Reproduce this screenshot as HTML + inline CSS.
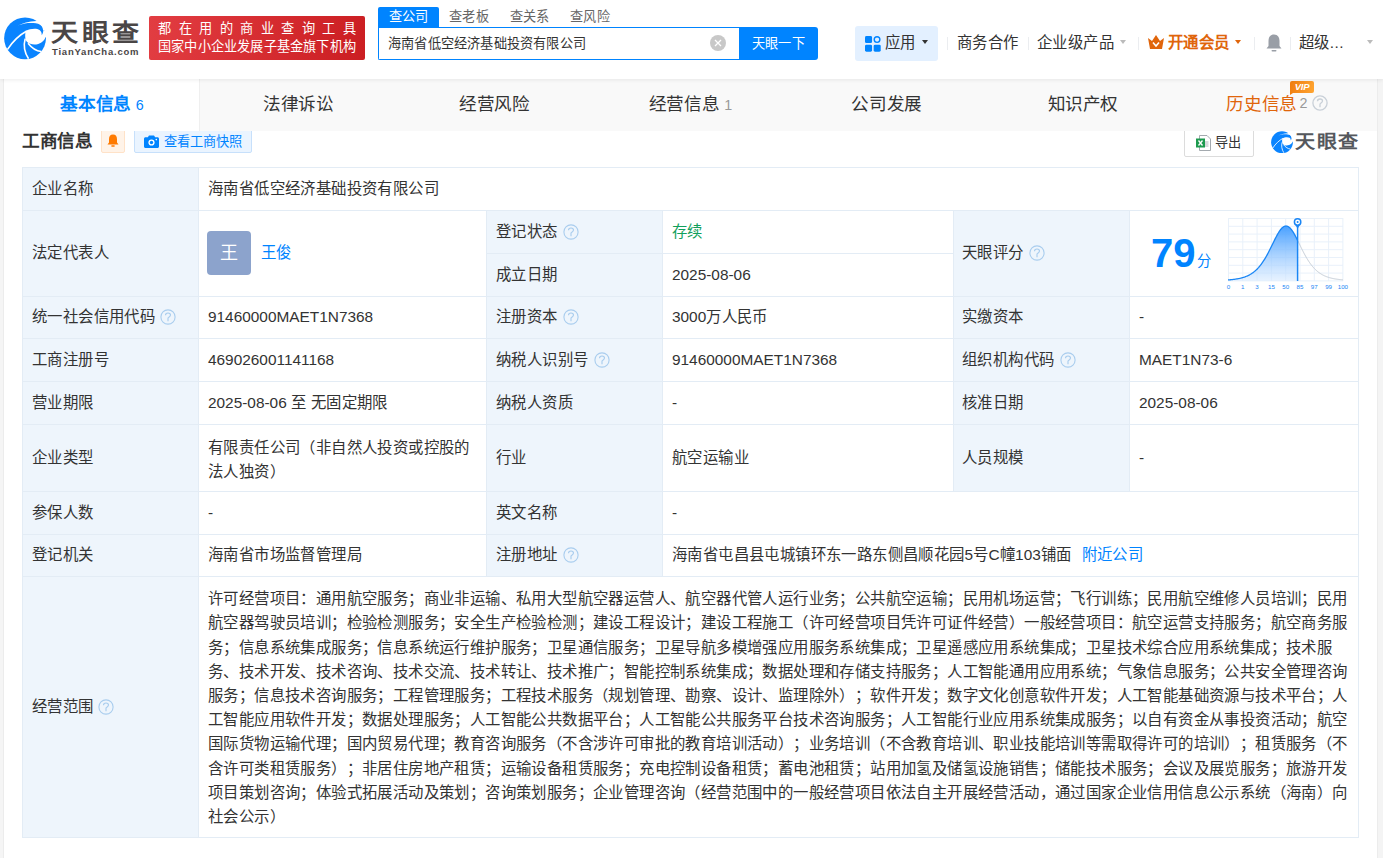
<!DOCTYPE html><html lang="zh-CN"><head><meta charset="utf-8"><title>天眼查</title><style>
*{margin:0;padding:0;box-sizing:border-box}
html,body{width:1383px;height:858px;overflow:hidden;background:#fff}
body{font-family:"Liberation Sans",sans-serif;color:#333;position:relative;text-spacing-trim:space-all;-webkit-font-smoothing:antialiased}
.ab{position:absolute;white-space:nowrap}
.hdr{position:absolute;left:0;top:0;width:1383px;height:79px;background:#fff;box-shadow:0 1px 4px rgba(0,0,0,.08);z-index:5}
.tb{position:absolute;left:4px;top:79px;width:1373px;height:52px;background:#f9f9f9;z-index:4}
.lbl{background:#eef5fc}
.cell{position:absolute}
.q{display:inline-block;position:absolute;width:14px;height:14px;border:1px solid #b9d3ec;border-radius:50%;color:#a9c6e6;font-size:10px;line-height:12px;text-align:center}
</style></head><body>
<div class="ab" style="left:0;top:79px;width:3px;height:779px;background:#f5f5f5"></div>
<div class="ab" style="left:3px;top:79px;width:1px;height:779px;background:#ececec"></div>
<div class="ab" style="left:1377px;top:79px;width:1px;height:779px;background:#ececec"></div>
<div class="ab" style="left:1378px;top:79px;width:5px;height:779px;background:#f4f4f4"></div>
<div class="hdr">
<svg class="ab" style="left:2px;top:15px" width="46" height="46" viewBox="0 0 858 858"><circle cx="430" cy="435" r="390" fill="#0a84ff"/>
<path d="M295 195 C 380 155, 500 120, 640 112 L 700 40 L 900 40 L 900 287 L 768 290 C 762 240, 745 200, 709 180 C 640 148, 520 145, 429 160 C 380 170, 330 182, 295 195 Z" fill="#fff"/>
<path d="M440 300 C 520 255, 640 240, 700 280 C 735 305, 745 345, 738 378 C 765 340, 772 310, 768 290 L 900 290 L 900 400 L 815 410 C 790 470, 745 530, 640 548 C 560 556, 505 535, 480 515 C 440 480, 420 440, 440 300 Z" fill="#fff"/>
<path d="M462 298 C 330 370, 200 490, 100 645" stroke="#fff" stroke-width="30" fill="none"/>
<path d="M432 440 C 400 560, 420 700, 495 815" stroke="#fff" stroke-width="30" fill="none"/>
<path d="M485 525 C 560 620, 640 670, 730 682" stroke="#fff" stroke-width="30" fill="none"/></svg>
<div class="ab" style="left:51px;top:17.5px;font-size:27px;line-height:34px;font-weight:bold;color:#4a4646;letter-spacing:3.5px;transform:scaleY(0.9);transform-origin:0 0">天眼查</div>
<div class="ab" style="left:52px;top:47px;font-size:9.5px;line-height:10px;font-weight:bold;color:#4a4646;letter-spacing:0.78px">TianYanCha.com</div>
<div class="ab" style="left:149px;top:16px;width:216px;height:44px;border-radius:2px;background:linear-gradient(100deg,#e23d42,#cb1e22)"></div>
<div class="ab" style="left:158px;top:20px;width:198px;font-size:13.2px;line-height:18px;color:#fff;text-align:justify;text-align-last:justify;letter-spacing:0.2px">都 在 用 的 商 业 查 询 工 具</div>
<div class="ab" style="left:158px;top:37.5px;font-size:13.2px;line-height:18px;color:#fff;letter-spacing:0.2px">国家中小企业发展子基金旗下机构</div>
<div class="ab" style="left:378px;top:7px;width:61px;height:21px;background:#0084ff;border-radius:2px 2px 0 0"></div>
<div class="ab" style="left:378.0px;top:7px;width:61px;text-align:center;font-size:13.2px;line-height:20px;color:#fff;letter-spacing:0.2px">查公司</div>
<div class="ab" style="left:438.5px;top:7px;width:61px;text-align:center;font-size:13.2px;line-height:20px;color:#666;letter-spacing:0.2px">查老板</div>
<div class="ab" style="left:499.0px;top:7px;width:61px;text-align:center;font-size:13.2px;line-height:20px;color:#666;letter-spacing:0.2px">查关系</div>
<div class="ab" style="left:559.5px;top:7px;width:61px;text-align:center;font-size:13.2px;line-height:20px;color:#666;letter-spacing:0.2px">查风险</div>
<div class="ab" style="left:378px;top:27px;width:363px;height:33px;border:1px solid #0084ff;border-right:none;border-radius:0 0 0 2px;background:#fff"></div>
<div class="ab" style="left:388px;top:34px;font-size:13.2px;line-height:20px;color:#333;letter-spacing:0.2px">海南省低空经济基础投资有限公司</div>
<svg class="ab" style="left:710px;top:35px" width="16" height="16" viewBox="0 0 16 16"><circle cx="8" cy="8" r="8" fill="#c8c8c8"/><path d="M5 5L11 11M11 5L5 11" stroke="#fff" stroke-width="1.3"/></svg>
<div class="ab" style="left:739px;top:27px;width:79px;height:33px;background:#0084ff;border-radius:0 3px 3px 0;color:#fff;font-size:13.2px;line-height:33px;text-align:center;letter-spacing:0.2px">天眼一下</div>
<div class="ab" style="left:855px;top:26px;width:83px;height:35px;background:#e3f0ff;border-radius:3px"></div>
<svg class="ab" style="left:864.5px;top:35.5px" width="16" height="16" viewBox="0 0 17 17">
<rect x="0" y="0" width="7.5" height="7.5" rx="1.5" fill="#0084ff"/>
<circle cx="12.8" cy="3.75" r="3" fill="none" stroke="#0084ff" stroke-width="1.5"/>
<rect x="0" y="9.2" width="7.5" height="7.5" rx="1.5" fill="#0084ff"/>
<rect x="9.2" y="9.2" width="7.5" height="7.5" rx="1.5" fill="#0084ff"/>
</svg>
<div class="ab" style="left:885px;top:32px;font-size:15.4px;line-height:22px;color:#333;letter-spacing:0.4px">应用</div>
<div class="ab" style="left:921.7px;top:40px;width:0;height:0;border-left:3.3px solid transparent;border-right:3.3px solid transparent;border-top:4px solid #333"></div>
<div class="ab" style="left:947px;top:37px;width:1px;height:13px;background:#ebedf0"></div>
<div class="ab" style="left:957px;top:32px;font-size:15.4px;line-height:22px;color:#333;letter-spacing:0.4px">商务合作</div>
<div class="ab" style="left:1028px;top:37px;width:1px;height:13px;background:#ebedf0"></div>
<div class="ab" style="left:1037px;top:32px;font-size:15.4px;line-height:22px;color:#333;letter-spacing:0.4px">企业级产品</div>
<div class="ab" style="left:1119.7px;top:40px;width:0;height:0;border-left:3.3px solid transparent;border-right:3.3px solid transparent;border-top:4px solid #bbb"></div>
<div class="ab" style="left:1138px;top:37px;width:1px;height:13px;background:#ebedf0"></div>
<svg class="ab" style="left:1148px;top:35px" width="16" height="14" viewBox="0 0 16 14">
<path d="M0 3 L4 6 L8 0 L12 6 L16 3 L14 14 L2 14 Z" fill="#e0650b"/>
<path d="M5 7.5 L8 11 L11 7.5" stroke="#fff" stroke-width="1.6" fill="none"/>
</svg>
<div class="ab" style="left:1168px;top:32px;font-size:15.4px;line-height:22px;color:#e0650b;font-weight:bold;letter-spacing:0.4px">开通会员</div>
<div class="ab" style="left:1234.7px;top:40px;width:0;height:0;border-left:3.3px solid transparent;border-right:3.3px solid transparent;border-top:4px solid #e0650b"></div>
<div class="ab" style="left:1254px;top:37px;width:1px;height:13px;background:#ebedf0"></div>
<svg class="ab" style="left:1266px;top:34px" width="16" height="18" viewBox="0 0 16 18">
<path d="M8 0.5 C 4 0.5 2.5 3.5 2.5 7 L2.5 12 L0.5 14.5 L15.5 14.5 L13.5 12 L13.5 7 C13.5 3.5 12 0.5 8 0.5Z" fill="#999ea6"/>
<rect x="5.5" y="16" width="5" height="1.6" rx="0.8" fill="#999ea6"/>
</svg>
<div class="ab" style="left:1290px;top:37px;width:1px;height:13px;background:#ebedf0"></div>
<div class="ab" style="left:1299px;top:32px;font-size:15.4px;line-height:22px;color:#333;letter-spacing:0.4px">超级...</div>
<div class="ab" style="left:1366.7px;top:40px;width:0;height:0;border-left:3.3px solid transparent;border-right:3.3px solid transparent;border-top:4px solid #bbb"></div>
</div>
<div class="tb">
<div class="ab" style="left:0;top:0;width:195px;height:52px;background:#fff"></div>
<div class="ab" style="left:195px;top:0;width:1px;height:52px;background:#efefef"></div>
<div class="ab" style="left:0.00px;top:0px;width:196.14px;height:52px;text-align:center;font-size:17.6px;line-height:50px;color:#0084ff;font-weight:bold;letter-spacing:-0.4px">基本信息<span style="font-size:14.3px;color:#0084ff;margin-left:5px;font-weight:normal;letter-spacing:0">6</span></div>
<div class="ab" style="left:196.14px;top:0px;width:196.14px;height:52px;text-align:center;font-size:17.6px;line-height:50px;color:#333;letter-spacing:-0.4px">法律诉讼</div>
<div class="ab" style="left:392.29px;top:0px;width:196.14px;height:52px;text-align:center;font-size:17.6px;line-height:50px;color:#333;letter-spacing:-0.4px">经营风险</div>
<div class="ab" style="left:588.43px;top:0px;width:196.14px;height:52px;text-align:center;font-size:17.6px;line-height:50px;color:#333;letter-spacing:-0.4px">经营信息<span style="font-size:14.3px;color:#999;margin-left:5px;font-weight:normal;letter-spacing:0">1</span></div>
<div class="ab" style="left:784.57px;top:0px;width:196.14px;height:52px;text-align:center;font-size:17.6px;line-height:50px;color:#333;letter-spacing:-0.4px">公司发展</div>
<div class="ab" style="left:980.71px;top:0px;width:196.14px;height:52px;text-align:center;font-size:17.6px;line-height:50px;color:#333;letter-spacing:-0.4px">知识产权</div>
<div class="ab" style="left:1174.36px;top:-1px;width:196.14px;height:52px;text-align:center;font-size:17.6px;line-height:50px;color:#e0650b;letter-spacing:-0.4px">历史信息<span style="font-size:14.3px;color:#999;margin-left:2.5px;font-weight:normal;letter-spacing:0;vertical-align:1.5px">2</span><span style="display:inline-block;width:19px;height:10px"></span></div>
<svg class="ab" style="left:1307.5px;top:16px" width="16" height="16" viewBox="0 0 16 16"><path d="M5.5 6.2 C5.5 4.9 6.6 4 8 4 C9.4 4 10.5 4.9 10.5 6.1 C10.5 7.2 9.6 7.7 8.7 8.3 C8.2 8.6 8 9 8 9.6 L8 12.3" fill="none" stroke="#c9d0d8" stroke-width="1.3"/><circle cx="8" cy="8" r="7.1" fill="none" stroke="#c9d0d8" stroke-width="1.3"/></svg>
<div class="ab" style="left:1286px;top:2px;width:24px;height:12px;background:linear-gradient(100deg,#f07d10,#ffa531);border-radius:2px 2px 2px 0;color:#fff;font-size:9.5px;line-height:12px;font-weight:bold;font-style:italic;text-align:center;letter-spacing:-0.3px">VIP</div>
<div class="ab" style="left:1286px;top:13.5px;width:0;height:0;border-top:2.5px solid #f07d10;border-right:3.5px solid transparent"></div>
</div>
<div class="ab" style="left:22px;top:128px;font-size:17.6px;line-height:26px;font-weight:bold;color:#333;letter-spacing:-0.4px">工商信息</div>
<div class="ab" style="left:101px;top:128px;width:24px;height:25px;background:#fff3e8;border:1px solid #ffe2c8;border-radius:2px"></div>
<svg class="ab" style="left:107px;top:134px" width="12" height="13" viewBox="0 0 12 13"><path d="M6 0.5C3.2 0.5 2 2.6 2 5.2L2 8.6L0.5 10.5L11.5 10.5L10 8.6L10 5.2C10 2.6 8.8 0.5 6 0.5Z" fill="#ff7a00"/><rect x="4.2" y="11.2" width="3.6" height="1.6" rx="0.8" fill="#ff7a00"/></svg>
<div class="ab" style="left:134px;top:128px;width:118px;height:25px;background:#eaf4ff;border:1px solid #c7e0fb;border-radius:2px"></div>
<svg class="ab" style="left:144px;top:135px" width="15" height="13" viewBox="0 0 15 13">
<path d="M5 0.5 L10 0.5 L11.2 2.3 L13.5 2.3 C14.3 2.3 15 3 15 3.8 L15 11.5 C15 12.3 14.3 13 13.5 13 L1.5 13 C0.7 13 0 12.3 0 11.5 L0 3.8 C0 3 0.7 2.3 1.5 2.3 L3.8 2.3 Z" fill="#0084ff"/>
<circle cx="7.5" cy="7.5" r="3.1" fill="#fff"/><circle cx="7.5" cy="7.5" r="1.7" fill="#0084ff"/><circle cx="12.3" cy="4.6" r="0.8" fill="#fff"/>
</svg>
<div class="ab" style="left:163.5px;top:131.5px;font-size:13.2px;line-height:20px;color:#0084ff;letter-spacing:0.2px">查看工商快照</div>
<div class="ab" style="left:1184px;top:128px;width:70px;height:29px;background:#fff;border:1px solid #dcdcdc;border-radius:2px"></div>
<svg class="ab" style="left:1196px;top:135px" width="15" height="16" viewBox="0 0 15 16">
<path d="M3.5 0.5 L11 0.5 L14.5 4 L14.5 15.5 L3.5 15.5 Z" fill="#fff" stroke="#9aa0a6" stroke-width="0.9"/>
<path d="M8 7 H12.5 M8 9 H12.5 M8 11 H12.5" stroke="#9aa0a6" stroke-width="0.8"/>
<rect x="0" y="3.5" width="9" height="9" fill="#1d9a4e"/>
<path d="M2.5 5.5 L6.5 10.5 M6.5 5.5 L2.5 10.5" stroke="#fff" stroke-width="1.3"/>
</svg>
<div class="ab" style="left:1215px;top:133px;font-size:13.2px;line-height:20px;color:#333;letter-spacing:0.2px">导出</div>
<svg class="ab" style="left:1270px;top:130px" width="24" height="24" viewBox="0 0 858 858"><circle cx="430" cy="435" r="390" fill="#0a84ff"/>
<path d="M295 195 C 380 155, 500 120, 640 112 L 700 40 L 900 40 L 900 287 L 768 290 C 762 240, 745 200, 709 180 C 640 148, 520 145, 429 160 C 380 170, 330 182, 295 195 Z" fill="#fff"/>
<path d="M440 300 C 520 255, 640 240, 700 280 C 735 305, 745 345, 738 378 C 765 340, 772 310, 768 290 L 900 290 L 900 400 L 815 410 C 790 470, 745 530, 640 548 C 560 556, 505 535, 480 515 C 440 480, 420 440, 440 300 Z" fill="#fff"/>
<path d="M462 298 C 330 370, 200 490, 100 645" stroke="#fff" stroke-width="30" fill="none"/>
<path d="M432 440 C 400 560, 420 700, 495 815" stroke="#fff" stroke-width="30" fill="none"/>
<path d="M485 525 C 560 620, 640 670, 730 682" stroke="#fff" stroke-width="30" fill="none"/></svg>
<div class="ab" style="left:1295px;top:130px;font-size:20px;line-height:26px;font-weight:bold;color:#55585d;letter-spacing:1.5px;transform:scaleY(0.9);transform-origin:0 0">天眼查</div>
<div class="ab" style="left:22px;top:167px;width:176px;height:670px;background:#eef5fc"></div>
<div class="ab" style="left:486px;top:210px;width:176px;height:366px;background:#eef5fc"></div>
<div class="ab" style="left:953px;top:210px;width:176px;height:281px;background:#eef5fc"></div>
<div class="ab" style="left:22px;top:167px;width:1337px;height:1px;background:#e3ecf5"></div>
<div class="ab" style="left:22px;top:210px;width:1337px;height:1px;background:#e3ecf5"></div>
<div class="ab" style="left:22px;top:296px;width:1337px;height:1px;background:#e3ecf5"></div>
<div class="ab" style="left:22px;top:338px;width:1337px;height:1px;background:#e3ecf5"></div>
<div class="ab" style="left:22px;top:381px;width:1337px;height:1px;background:#e3ecf5"></div>
<div class="ab" style="left:22px;top:424px;width:1337px;height:1px;background:#e3ecf5"></div>
<div class="ab" style="left:22px;top:491px;width:1337px;height:1px;background:#e3ecf5"></div>
<div class="ab" style="left:22px;top:534px;width:1337px;height:1px;background:#e3ecf5"></div>
<div class="ab" style="left:22px;top:576px;width:1337px;height:1px;background:#e3ecf5"></div>
<div class="ab" style="left:22px;top:837px;width:1337px;height:1px;background:#e3ecf5"></div>
<div class="ab" style="left:486px;top:253px;width:468px;height:1px;background:#e3ecf5"></div>
<div class="ab" style="left:22px;top:167px;width:1px;height:671px;background:#e3ecf5"></div>
<div class="ab" style="left:1358px;top:167px;width:1px;height:671px;background:#e3ecf5"></div>
<div class="ab" style="left:198px;top:167px;width:1px;height:671px;background:#e3ecf5"></div>
<div class="ab" style="left:486px;top:210px;width:1px;height:367px;background:#e3ecf5"></div>
<div class="ab" style="left:662px;top:210px;width:1px;height:367px;background:#e3ecf5"></div>
<div class="ab" style="left:953px;top:210px;width:1px;height:282px;background:#e3ecf5"></div>
<div class="ab" style="left:1129px;top:210px;width:1px;height:282px;background:#e3ecf5"></div>
<div class="ab" style="left:32px;top:177.5px;font-size:15.4px;line-height:22px;;letter-spacing:0.4px"><span style="letter-spacing:0.4px">企业名称</span></div>
<div class="ab" style="left:208px;top:177.5px;font-size:15.4px;line-height:22px;;letter-spacing:0.4px"><span style="letter-spacing:0.4px">海南省低空经济基础投资有限公司</span></div>
<div class="ab" style="left:32px;top:242.0px;font-size:15.4px;line-height:22px;;letter-spacing:0.4px"><span style="letter-spacing:0.4px">法定代表人</span></div>
<div class="ab" style="left:207px;top:231px;width:44px;height:44px;border-radius:4px;background:#8ca3cc;color:#fff;font-size:18px;line-height:44px;text-align:center">王</div>
<div class="ab" style="left:261px;top:242.0px;font-size:15.4px;line-height:22px;color:#0084ff;letter-spacing:0.4px"><span style="letter-spacing:0.4px">王俊</span></div>
<div class="ab" style="left:496px;top:220.5px;font-size:15.4px;line-height:22px;;letter-spacing:0.4px"><span style="letter-spacing:0.4px">登记状态</span></div>
<svg class="ab" style="left:562.5px;top:223.5px" width="16" height="16" viewBox="0 0 16 16"><path d="M5.5 6.2 C5.5 4.9 6.6 4 8 4 C9.4 4 10.5 4.9 10.5 6.1 C10.5 7.2 9.6 7.7 8.7 8.3 C8.2 8.6 8 9 8 9.6 L8 12.3" fill="none" stroke="#a9cdee" stroke-width="1.15"/><circle cx="8" cy="8" r="7.1" fill="none" stroke="#a9cdee" stroke-width="1.1"/></svg>
<div class="ab" style="left:672px;top:220.5px;font-size:15.4px;line-height:22px;color:#12a05c;letter-spacing:0.4px"><span style="letter-spacing:0.4px">存续</span></div>
<div class="ab" style="left:496px;top:263.5px;font-size:15.4px;line-height:22px;;letter-spacing:0.4px"><span style="letter-spacing:0.4px">成立日期</span></div>
<div class="ab" style="left:672px;top:263.5px;font-size:15.4px;line-height:22px;;letter-spacing:0.4px"><span style="letter-spacing:0.4px"><span style="letter-spacing:0">2025-08-06</span></span></div>
<div class="ab" style="left:962px;top:242.0px;font-size:15.4px;line-height:22px;;letter-spacing:0.4px"><span style="letter-spacing:0.4px">天眼评分</span></div>
<svg class="ab" style="left:1028.5px;top:245.0px" width="16" height="16" viewBox="0 0 16 16"><path d="M5.5 6.2 C5.5 4.9 6.6 4 8 4 C9.4 4 10.5 4.9 10.5 6.1 C10.5 7.2 9.6 7.7 8.7 8.3 C8.2 8.6 8 9 8 9.6 L8 12.3" fill="none" stroke="#a9cdee" stroke-width="1.15"/><circle cx="8" cy="8" r="7.1" fill="none" stroke="#a9cdee" stroke-width="1.1"/></svg>
<div class="ab" style="left:1151px;top:230px;font-size:40px;line-height:46px;font-weight:bold;color:#0084ff">79</div>
<div class="ab" style="left:1197px;top:251px;font-size:14.3px;line-height:20px;color:#0084ff;letter-spacing:0.3px">分</div>
<svg class="ab" style="left:1224px;top:218px" width="126" height="75" viewBox="0 0 126 75">
<defs><linearGradient id="g1" x1="0" y1="0" x2="0" y2="1"><stop offset="0" stop-color="#3f9bff" stop-opacity=".95"/><stop offset="1" stop-color="#d6e9ff" stop-opacity=".6"/></linearGradient></defs>
<line x1="4.50" y1="0" x2="4.50" y2="63" stroke="#e9f1fa" stroke-width="1"/><line x1="18.80" y1="0" x2="18.80" y2="63" stroke="#e9f1fa" stroke-width="1"/><line x1="33.10" y1="0" x2="33.10" y2="63" stroke="#e9f1fa" stroke-width="1"/><line x1="47.40" y1="0" x2="47.40" y2="63" stroke="#e9f1fa" stroke-width="1"/><line x1="61.70" y1="0" x2="61.70" y2="63" stroke="#e9f1fa" stroke-width="1"/><line x1="76.00" y1="0" x2="76.00" y2="63" stroke="#e9f1fa" stroke-width="1"/><line x1="90.30" y1="0" x2="90.30" y2="63" stroke="#e9f1fa" stroke-width="1"/><line x1="104.60" y1="0" x2="104.60" y2="63" stroke="#e9f1fa" stroke-width="1"/><line x1="118.90" y1="0" x2="118.90" y2="63" stroke="#e9f1fa" stroke-width="1"/><line x1="4" y1="0.50" x2="119" y2="0.50" stroke="#e9f1fa" stroke-width="1"/><line x1="4" y1="8.30" x2="119" y2="8.30" stroke="#e9f1fa" stroke-width="1"/><line x1="4" y1="16.10" x2="119" y2="16.10" stroke="#e9f1fa" stroke-width="1"/><line x1="4" y1="23.90" x2="119" y2="23.90" stroke="#e9f1fa" stroke-width="1"/><line x1="4" y1="31.70" x2="119" y2="31.70" stroke="#e9f1fa" stroke-width="1"/><line x1="4" y1="39.50" x2="119" y2="39.50" stroke="#e9f1fa" stroke-width="1"/><line x1="4" y1="47.30" x2="119" y2="47.30" stroke="#e9f1fa" stroke-width="1"/><line x1="4" y1="55.10" x2="119" y2="55.10" stroke="#e9f1fa" stroke-width="1"/><line x1="4" y1="62.90" x2="119" y2="62.90" stroke="#e9f1fa" stroke-width="1"/>
<path d="M4.00,61.94 4.50,61.90 5.00,61.87 5.50,61.82 6.00,61.78 6.50,61.73 7.00,61.69 7.50,61.64 8.00,61.58 8.50,61.53 9.00,61.47 9.50,61.41 10.00,61.35 10.50,61.28 11.00,61.21 11.50,61.14 12.00,61.06 12.50,60.98 13.00,60.89 13.50,60.81 14.00,60.71 14.50,60.62 15.00,60.51 15.50,60.41 16.00,60.29 16.50,60.18 17.00,60.05 17.50,59.92 18.00,59.79 18.50,59.65 19.00,59.50 19.50,59.35 20.00,59.18 20.50,59.01 21.00,58.84 21.50,58.65 22.00,58.46 22.50,58.25 23.00,58.04 23.50,57.82 24.00,57.58 24.50,57.34 25.00,57.09 25.50,56.82 26.00,56.55 26.50,56.26 27.00,55.95 27.50,55.64 28.00,55.31 28.50,54.97 29.00,54.61 29.50,54.24 30.00,53.85 30.50,53.45 31.00,53.03 31.50,52.59 32.00,52.14 32.50,51.67 33.00,51.18 33.50,50.67 34.00,50.14 34.50,49.60 35.00,49.03 35.50,48.44 36.00,47.83 36.50,47.20 37.00,46.55 37.50,45.88 38.00,45.19 38.50,44.47 39.00,43.73 39.50,42.97 40.00,42.19 40.50,41.39 41.00,40.57 41.50,39.73 42.00,38.86 42.50,37.98 43.00,37.08 43.50,36.16 44.00,35.22 44.50,34.27 45.00,33.30 45.50,32.32 46.00,31.32 46.50,30.32 47.00,29.31 47.50,28.29 48.00,27.26 48.50,26.24 49.00,25.21 49.50,24.19 50.00,23.17 50.50,22.16 51.00,21.15 51.50,20.17 52.00,19.20 52.50,18.25 53.00,17.32 53.50,16.42 54.00,15.55 54.50,14.71 55.00,13.91 55.50,13.15 56.00,12.43 56.50,11.76 57.00,11.13 57.50,10.55 58.00,10.03 58.50,9.56 59.00,9.15 59.50,8.81 60.00,8.52 60.50,8.29 61.00,8.13 61.50,8.03 62.00,8.00 62.50,8.03 63.00,8.13 63.50,8.29 64.00,8.52 64.50,8.81 65.00,9.15 65.50,9.56 66.00,10.03 66.50,10.55 67.00,11.13 67.50,11.76 68.00,12.43 68.50,13.15 69.00,13.91 69.50,14.71 70.00,15.55 70.50,16.42 71.00,17.32 71.50,18.25 72.00,19.20 72.50,20.17 73.00,21.15 73.50,22.16 73.60,22.36 L73.6,62.7 L4,62.7 Z" fill="url(#g1)"/>
<polyline points="4.00,61.94 4.50,61.90 5.00,61.87 5.50,61.82 6.00,61.78 6.50,61.73 7.00,61.69 7.50,61.64 8.00,61.58 8.50,61.53 9.00,61.47 9.50,61.41 10.00,61.35 10.50,61.28 11.00,61.21 11.50,61.14 12.00,61.06 12.50,60.98 13.00,60.89 13.50,60.81 14.00,60.71 14.50,60.62 15.00,60.51 15.50,60.41 16.00,60.29 16.50,60.18 17.00,60.05 17.50,59.92 18.00,59.79 18.50,59.65 19.00,59.50 19.50,59.35 20.00,59.18 20.50,59.01 21.00,58.84 21.50,58.65 22.00,58.46 22.50,58.25 23.00,58.04 23.50,57.82 24.00,57.58 24.50,57.34 25.00,57.09 25.50,56.82 26.00,56.55 26.50,56.26 27.00,55.95 27.50,55.64 28.00,55.31 28.50,54.97 29.00,54.61 29.50,54.24 30.00,53.85 30.50,53.45 31.00,53.03 31.50,52.59 32.00,52.14 32.50,51.67 33.00,51.18 33.50,50.67 34.00,50.14 34.50,49.60 35.00,49.03 35.50,48.44 36.00,47.83 36.50,47.20 37.00,46.55 37.50,45.88 38.00,45.19 38.50,44.47 39.00,43.73 39.50,42.97 40.00,42.19 40.50,41.39 41.00,40.57 41.50,39.73 42.00,38.86 42.50,37.98 43.00,37.08 43.50,36.16 44.00,35.22 44.50,34.27 45.00,33.30 45.50,32.32 46.00,31.32 46.50,30.32 47.00,29.31 47.50,28.29 48.00,27.26 48.50,26.24 49.00,25.21 49.50,24.19 50.00,23.17 50.50,22.16 51.00,21.15 51.50,20.17 52.00,19.20 52.50,18.25 53.00,17.32 53.50,16.42 54.00,15.55 54.50,14.71 55.00,13.91 55.50,13.15 56.00,12.43 56.50,11.76 57.00,11.13 57.50,10.55 58.00,10.03 58.50,9.56 59.00,9.15 59.50,8.81 60.00,8.52 60.50,8.29 61.00,8.13 61.50,8.03 62.00,8.00 62.50,8.03 63.00,8.13 63.50,8.29 64.00,8.52 64.50,8.81 65.00,9.15 65.50,9.56 66.00,10.03 66.50,10.55 67.00,11.13 67.50,11.76 68.00,12.43 68.50,13.15 69.00,13.91 69.50,14.71 70.00,15.55 70.50,16.42 71.00,17.32 71.50,18.25 72.00,19.20 72.50,20.17 73.00,21.15 73.50,22.16 73.60,22.36" fill="none" stroke="#1a86f5" stroke-width="1.3"/>
<polyline points="73.60,22.36 74.00,23.17 74.50,24.19 75.00,25.21 75.50,26.24 76.00,27.26 76.50,28.29 77.00,29.31 77.50,30.32 78.00,31.32 78.50,32.32 79.00,33.30 79.50,34.27 80.00,35.22 80.50,36.16 81.00,37.08 81.50,37.98 82.00,38.86 82.50,39.73 83.00,40.57 83.50,41.39 84.00,42.19 84.50,42.97 85.00,43.73 85.50,44.47 86.00,45.19 86.50,45.88 87.00,46.55 87.50,47.20 88.00,47.83 88.50,48.44 89.00,49.03 89.50,49.60 90.00,50.14 90.50,50.67 91.00,51.18 91.50,51.67 92.00,52.14 92.50,52.59 93.00,53.03 93.50,53.45 94.00,53.85 94.50,54.24 95.00,54.61 95.50,54.97 96.00,55.31 96.50,55.64 97.00,55.95 97.50,56.26 98.00,56.55 98.50,56.82 99.00,57.09 99.50,57.34 100.00,57.58 100.50,57.82 101.00,58.04 101.50,58.25 102.00,58.46 102.50,58.65 103.00,58.84 103.50,59.01 104.00,59.18 104.50,59.35 105.00,59.50 105.50,59.65 106.00,59.79 106.50,59.92 107.00,60.05 107.50,60.18 108.00,60.29 108.50,60.41 109.00,60.51 109.50,60.62 110.00,60.71 110.50,60.81 111.00,60.89 111.50,60.98 112.00,61.06 112.50,61.14 113.00,61.21 113.50,61.28 114.00,61.35 114.50,61.41 115.00,61.47 115.50,61.53 116.00,61.58 116.50,61.64 117.00,61.69 117.50,61.73 118.00,61.78 118.50,61.82 119.00,61.87" fill="none" stroke="#c5cdd6" stroke-width="1"/>
<line x1="73.6" y1="6" x2="73.6" y2="63" stroke="#1a86f5" stroke-width="1.5"/>
<path d="M70.30 5.2 L73.60 10.8 L76.90 5.2 Z" fill="#1a86f5"/><circle cx="73.6" cy="4" r="3.2" fill="#fff" stroke="#1a86f5" stroke-width="1.5"/>
<circle cx="73.6" cy="4" r="1" fill="#1a86f5"/>
<g font-family="Liberation Sans" font-size="6.2" fill="#1a86f5" text-anchor="middle"><text x="4.50" y="71">0</text><text x="18.80" y="71">1</text><text x="33.10" y="71">3</text><text x="47.40" y="71">15</text><text x="61.70" y="71">50</text><text x="76.00" y="71">85</text><text x="90.30" y="71">97</text><text x="104.60" y="71">99</text><text x="118.90" y="71">100</text></g></svg>
<div class="ab" style="left:32px;top:306.0px;font-size:15.4px;line-height:22px;;letter-spacing:0.4px"><span style="letter-spacing:0.4px">统一社会信用代码</span></div>
<svg class="ab" style="left:159.5px;top:309.0px" width="16" height="16" viewBox="0 0 16 16"><path d="M5.5 6.2 C5.5 4.9 6.6 4 8 4 C9.4 4 10.5 4.9 10.5 6.1 C10.5 7.2 9.6 7.7 8.7 8.3 C8.2 8.6 8 9 8 9.6 L8 12.3" fill="none" stroke="#a9cdee" stroke-width="1.15"/><circle cx="8" cy="8" r="7.1" fill="none" stroke="#a9cdee" stroke-width="1.1"/></svg>
<div class="ab" style="left:208px;top:306.0px;font-size:15.4px;line-height:22px;;letter-spacing:0.4px"><span style="letter-spacing:0.4px"><span style="letter-spacing:0">91460000MAET1N7368</span></span></div>
<div class="ab" style="left:496px;top:306.0px;font-size:15.4px;line-height:22px;;letter-spacing:0.4px"><span style="letter-spacing:0.4px">注册资本</span></div>
<svg class="ab" style="left:562.5px;top:309.0px" width="16" height="16" viewBox="0 0 16 16"><path d="M5.5 6.2 C5.5 4.9 6.6 4 8 4 C9.4 4 10.5 4.9 10.5 6.1 C10.5 7.2 9.6 7.7 8.7 8.3 C8.2 8.6 8 9 8 9.6 L8 12.3" fill="none" stroke="#a9cdee" stroke-width="1.15"/><circle cx="8" cy="8" r="7.1" fill="none" stroke="#a9cdee" stroke-width="1.1"/></svg>
<div class="ab" style="left:672px;top:306.0px;font-size:15.4px;line-height:22px;;letter-spacing:0.4px"><span style="letter-spacing:0.4px"><span style="letter-spacing:0">3000</span>万人民币</span></div>
<div class="ab" style="left:962px;top:306.0px;font-size:15.4px;line-height:22px;;letter-spacing:0.4px"><span style="letter-spacing:0.4px">实缴资本</span></div>
<div class="ab" style="left:1139px;top:306.0px;font-size:15.4px;line-height:22px;;letter-spacing:0.4px"><span style="letter-spacing:0.4px"><span style="letter-spacing:0">-</span></span></div>
<div class="ab" style="left:32px;top:348.5px;font-size:15.4px;line-height:22px;;letter-spacing:0.4px"><span style="letter-spacing:0.4px">工商注册号</span></div>
<div class="ab" style="left:208px;top:348.5px;font-size:15.4px;line-height:22px;;letter-spacing:0.4px"><span style="letter-spacing:0.4px"><span style="letter-spacing:0">469026001141168</span></span></div>
<div class="ab" style="left:496px;top:348.5px;font-size:15.4px;line-height:22px;;letter-spacing:0.4px"><span style="letter-spacing:0.4px">纳税人识别号</span></div>
<svg class="ab" style="left:593.5px;top:351.5px" width="16" height="16" viewBox="0 0 16 16"><path d="M5.5 6.2 C5.5 4.9 6.6 4 8 4 C9.4 4 10.5 4.9 10.5 6.1 C10.5 7.2 9.6 7.7 8.7 8.3 C8.2 8.6 8 9 8 9.6 L8 12.3" fill="none" stroke="#a9cdee" stroke-width="1.15"/><circle cx="8" cy="8" r="7.1" fill="none" stroke="#a9cdee" stroke-width="1.1"/></svg>
<div class="ab" style="left:672px;top:348.5px;font-size:15.4px;line-height:22px;;letter-spacing:0.4px"><span style="letter-spacing:0.4px"><span style="letter-spacing:0">91460000MAET1N7368</span></span></div>
<div class="ab" style="left:962px;top:348.5px;font-size:15.4px;line-height:22px;;letter-spacing:0.4px"><span style="letter-spacing:0.4px">组织机构代码</span></div>
<svg class="ab" style="left:1059.5px;top:351.5px" width="16" height="16" viewBox="0 0 16 16"><path d="M5.5 6.2 C5.5 4.9 6.6 4 8 4 C9.4 4 10.5 4.9 10.5 6.1 C10.5 7.2 9.6 7.7 8.7 8.3 C8.2 8.6 8 9 8 9.6 L8 12.3" fill="none" stroke="#a9cdee" stroke-width="1.15"/><circle cx="8" cy="8" r="7.1" fill="none" stroke="#a9cdee" stroke-width="1.1"/></svg>
<div class="ab" style="left:1139px;top:348.5px;font-size:15.4px;line-height:22px;;letter-spacing:0.4px"><span style="letter-spacing:0.4px"><span style="letter-spacing:0">MAET1N73-6</span></span></div>
<div class="ab" style="left:32px;top:391.5px;font-size:15.4px;line-height:22px;;letter-spacing:0.4px"><span style="letter-spacing:0.4px">营业期限</span></div>
<div class="ab" style="left:208px;top:391.5px;font-size:15.4px;line-height:22px;;letter-spacing:0.4px"><span style="letter-spacing:0.4px"><span style="letter-spacing:0">2025-08-06 </span>至<span style="letter-spacing:0"> </span>无固定期限</span></div>
<div class="ab" style="left:496px;top:391.5px;font-size:15.4px;line-height:22px;;letter-spacing:0.4px"><span style="letter-spacing:0.4px">纳税人资质</span></div>
<div class="ab" style="left:672px;top:391.5px;font-size:15.4px;line-height:22px;;letter-spacing:0.4px"><span style="letter-spacing:0.4px"><span style="letter-spacing:0">-</span></span></div>
<div class="ab" style="left:962px;top:391.5px;font-size:15.4px;line-height:22px;;letter-spacing:0.4px"><span style="letter-spacing:0.4px">核准日期</span></div>
<div class="ab" style="left:1139px;top:391.5px;font-size:15.4px;line-height:22px;;letter-spacing:0.4px"><span style="letter-spacing:0.4px"><span style="letter-spacing:0">2025-08-06</span></span></div>
<div class="ab" style="left:32px;top:446.5px;font-size:15.4px;line-height:22px;;letter-spacing:0.4px"><span style="letter-spacing:0.4px">企业类型</span></div>
<div class="ab" style="left:208px;top:435.5px;font-size:15.4px;line-height:24.2px;letter-spacing:0.4px">有限责任公司（非自然人投资或控股的<br>法人独资）</div>
<div class="ab" style="left:496px;top:446.5px;font-size:15.4px;line-height:22px;;letter-spacing:0.4px"><span style="letter-spacing:0.4px">行业</span></div>
<div class="ab" style="left:672px;top:446.5px;font-size:15.4px;line-height:22px;;letter-spacing:0.4px"><span style="letter-spacing:0.4px">航空运输业</span></div>
<div class="ab" style="left:962px;top:446.5px;font-size:15.4px;line-height:22px;;letter-spacing:0.4px"><span style="letter-spacing:0.4px">人员规模</span></div>
<div class="ab" style="left:1139px;top:446.5px;font-size:15.4px;line-height:22px;;letter-spacing:0.4px"><span style="letter-spacing:0.4px"><span style="letter-spacing:0">-</span></span></div>
<div class="ab" style="left:32px;top:501.5px;font-size:15.4px;line-height:22px;;letter-spacing:0.4px"><span style="letter-spacing:0.4px">参保人数</span></div>
<div class="ab" style="left:208px;top:501.5px;font-size:15.4px;line-height:22px;;letter-spacing:0.4px"><span style="letter-spacing:0.4px"><span style="letter-spacing:0">-</span></span></div>
<div class="ab" style="left:496px;top:501.5px;font-size:15.4px;line-height:22px;;letter-spacing:0.4px"><span style="letter-spacing:0.4px">英文名称</span></div>
<div class="ab" style="left:672px;top:501.5px;font-size:15.4px;line-height:22px;;letter-spacing:0.4px"><span style="letter-spacing:0.4px"><span style="letter-spacing:0">-</span></span></div>
<div class="ab" style="left:32px;top:544.0px;font-size:15.4px;line-height:22px;;letter-spacing:0.4px"><span style="letter-spacing:0.4px">登记机关</span></div>
<div class="ab" style="left:208px;top:544.0px;font-size:15.4px;line-height:22px;;letter-spacing:0.4px"><span style="letter-spacing:0.4px">海南省市场监督管理局</span></div>
<div class="ab" style="left:496px;top:544.0px;font-size:15.4px;line-height:22px;;letter-spacing:0.4px"><span style="letter-spacing:0.4px">注册地址</span></div>
<svg class="ab" style="left:562.5px;top:547.0px" width="16" height="16" viewBox="0 0 16 16"><path d="M5.5 6.2 C5.5 4.9 6.6 4 8 4 C9.4 4 10.5 4.9 10.5 6.1 C10.5 7.2 9.6 7.7 8.7 8.3 C8.2 8.6 8 9 8 9.6 L8 12.3" fill="none" stroke="#a9cdee" stroke-width="1.15"/><circle cx="8" cy="8" r="7.1" fill="none" stroke="#a9cdee" stroke-width="1.1"/></svg>
<div class="ab" style="left:672px;top:544.0px;font-size:15.4px;line-height:22px;;letter-spacing:0.4px"><span style="letter-spacing:0.4px">海南省屯昌县屯城镇环东一路东侧昌顺花园<span style="letter-spacing:0">5</span>号<span style="letter-spacing:0">C</span>幢<span style="letter-spacing:0">103</span>铺面<span style="color:#0084ff;margin-left:10px">附近公司</span></span></div>
<div class="ab" style="left:32px;top:695.5px;font-size:15.4px;line-height:22px;;letter-spacing:0.4px"><span style="letter-spacing:0.4px">经营范围</span></div>
<svg class="ab" style="left:97.5px;top:698.5px" width="16" height="16" viewBox="0 0 16 16"><path d="M5.5 6.2 C5.5 4.9 6.6 4 8 4 C9.4 4 10.5 4.9 10.5 6.1 C10.5 7.2 9.6 7.7 8.7 8.3 C8.2 8.6 8 9 8 9.6 L8 12.3" fill="none" stroke="#a9cdee" stroke-width="1.15"/><circle cx="8" cy="8" r="7.1" fill="none" stroke="#a9cdee" stroke-width="1.1"/></svg>
<div class="ab" style="left:208px;top:587.20px;font-size:15.4px;line-height:24.2px;letter-spacing:0.4px"><span style="letter-spacing:0.4px">许可经营项目：通用航空服务；商业非运输、私用大型航空器运营人、航空器代管人运行业务；公共航空运输；民用机场运营；飞行训练；民用航空维修人员培训；民用</span></div>
<div class="ab" style="left:208px;top:611.40px;font-size:15.4px;line-height:24.2px;letter-spacing:0.4px"><span style="letter-spacing:0.4px">航空器驾驶员培训；检验检测服务；安全生产检验检测；建设工程设计；建设工程施工（许可经营项目凭许可证件经营）一般经营项目：航空运营支持服务；航空商务服</span></div>
<div class="ab" style="left:208px;top:635.60px;font-size:15.4px;line-height:24.2px;letter-spacing:0.4px"><span style="letter-spacing:0.4px">务；信息系统集成服务；信息系统运行维护服务；卫星通信服务；卫星导航多模增强应用服务系统集成；卫星遥感应用系统集成；卫星技术综合应用系统集成；技术服</span></div>
<div class="ab" style="left:208px;top:659.80px;font-size:15.4px;line-height:24.2px;letter-spacing:0.4px"><span style="letter-spacing:0.4px">务、技术开发、技术咨询、技术交流、技术转让、技术推广；智能控制系统集成；数据处理和存储支持服务；人工智能通用应用系统；气象信息服务；公共安全管理咨询</span></div>
<div class="ab" style="left:208px;top:684.00px;font-size:15.4px;line-height:24.2px;letter-spacing:0.4px"><span style="letter-spacing:0.4px">服务；信息技术咨询服务；工程管理服务；工程技术服务（规划管理、勘察、设计、监理除外）；软件开发；数字文化创意软件开发；人工智能基础资源与技术平台；人</span></div>
<div class="ab" style="left:208px;top:708.20px;font-size:15.4px;line-height:24.2px;letter-spacing:0.4px"><span style="letter-spacing:0.4px">工智能应用软件开发；数据处理服务；人工智能公共数据平台；人工智能公共服务平台技术咨询服务；人工智能行业应用系统集成服务；以自有资金从事投资活动；航空</span></div>
<div class="ab" style="left:208px;top:732.40px;font-size:15.4px;line-height:24.2px;letter-spacing:0.4px"><span style="letter-spacing:0.4px">国际货物运输代理；国内贸易代理；教育咨询服务（不含涉许可审批的教育培训活动）；业务培训（不含教育培训、职业技能培训等需取得许可的培训）；租赁服务（不</span></div>
<div class="ab" style="left:208px;top:756.60px;font-size:15.4px;line-height:24.2px;letter-spacing:0.4px"><span style="letter-spacing:0.4px">含许可类租赁服务）；非居住房地产租赁；运输设备租赁服务；充电控制设备租赁；蓄电池租赁；站用加氢及储氢设施销售；储能技术服务；会议及展览服务；旅游开发</span></div>
<div class="ab" style="left:208px;top:780.80px;font-size:15.4px;line-height:24.2px;letter-spacing:0.4px"><span style="letter-spacing:0.4px">项目策划咨询；体验式拓展活动及策划；咨询策划服务；企业管理咨询（经营范围中的一般经营项目依法自主开展经营活动，通过国家企业信用信息公示系统（海南）向</span></div>
<div class="ab" style="left:208px;top:805.00px;font-size:15.4px;line-height:24.2px;letter-spacing:0.4px"><span style="letter-spacing:0.4px">社会公示）</span></div>
</body></html>
